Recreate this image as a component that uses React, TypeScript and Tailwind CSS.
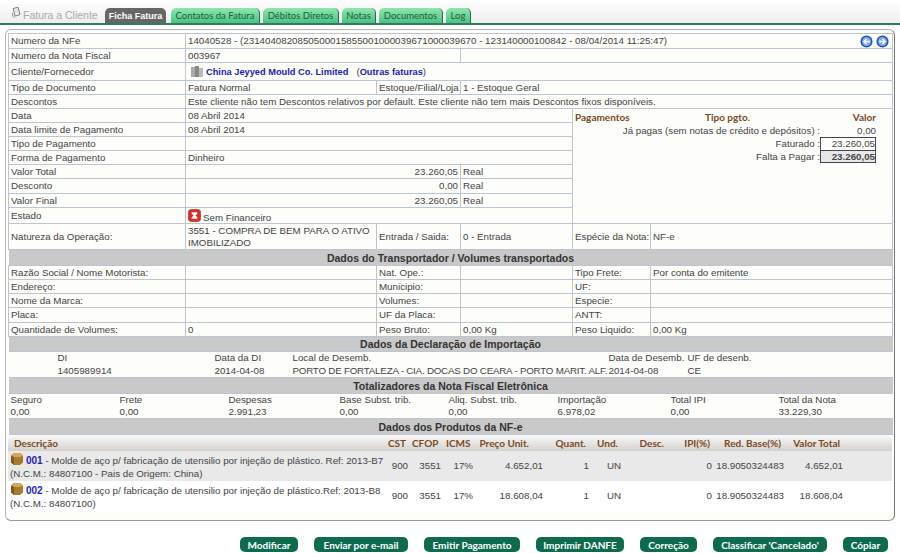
const line = 'border border-[#bcc6d2]';
const tdL = `${line} px-[2px] align-middle whitespace-nowrap`;
const head = 'bg-[#c9c9c9] text-center font-bold text-[10.5px] text-[#333] border-y border-[#bcc6d2]';
const deco = '[font-family:Lato,sans-serif]';

const tabs = [
  { name: 'Contatos da Fatura', w: 'w-[89px]' },
  { name: 'Débitos Diretos', w: 'w-[76px]' },
  { name: 'Notas', w: 'w-[34px]' },
  { name: 'Documentos', w: 'w-[64px]' },
  { name: 'Log', w: 'w-[25px]' },
];

const buttons = [
  { name: 'Modificar', w: 'w-[58px]' },
  { name: 'Enviar por e-mail', w: 'w-[94px]' },
  { name: 'Emitir Pagamento', w: 'w-[96px]' },
  { name: 'Imprimir DANFE', w: 'w-[88px]' },
  { name: 'Correção', w: 'w-[57px]' },
  { name: "Classificar 'Cancelado'", w: 'w-[114px]' },
  { name: 'Cópiar', w: 'w-[45px]' },
];

const transport = [
  { h: 'h-[14px]', cells: ['Razão Social / Nome Motorista:', '', 'Nat. Ope.:', '', 'Tipo Frete:', 'Por conta do emitente'] },
  { h: 'h-[14px]', cells: ['Endereço:', '', 'Municipio:', '', 'UF:', ''] },
  { h: 'h-[14px]', cells: ['Nome da Marca:', '', 'Volumes:', '', 'Especie:', ''] },
  { h: 'h-[15px]', cells: ['Placa:', '', 'UF da Placa:', '', 'ANTT:', ''] },
  { h: 'h-[14px]', cells: ['Quantidade de Volumes:', '0', 'Peso Bruto:', '0,00 Kg', 'Peso Liquido:', '0,00 Kg'] },
];

const totals = [
  ['Seguro', '0,00', 'w-[109px]'],
  ['Frete', '0,00', 'w-[109px]'],
  ['Despesas', '2.991,23', 'w-[111px]'],
  ['Base Subst. trib.', '0,00', 'w-[109px]'],
  ['Aliq. Subst. trib.', '0,00', 'w-[109px]'],
  ['Importação', '6.978,02', 'w-[113px]'],
  ['Total IPI', '0,00', 'w-[108px]'],
  ['Total da Nota', '33.229,30', 'w-[100px]'],
];

const products = [
  { code: '001', text: ' - Molde de aço p/ fabricação de utensilio por injeção de plástico. Ref: 2013-B7', sub: '(N.C.M.: 84807100 - Pais de Origem: China)', preco: '4.652,01', total: '4.652,01', bg: 'bg-[#e9e9e9]' },
  { code: '002', text: ' - Molde de aço p/ fabricação de utensilio por injeção de plástico.Ref: 2013-B8', sub: '(N.C.M.: 84807100)', preco: '18.608,04', total: '18.608,04', bg: 'bg-white' },
];

const Box = () => (
  <svg width="14" height="14" viewBox="0 0 14 14" className="inline-block align-top -mt-[2px] -mb-[2px]">
    <path d="M1 3.500 4 1h6l3 2.500v7L10 13H4l-3-2.500z" fill="#a8792f" />
    <path d="M1 3.500 4 1h6l3 2.500L10 5H4z" fill="#d3a85c" />
    <path d="M1 3.500 4 5v8l-3-2.500z" fill="#7d5a20" />
  </svg>
);

const Arrow = ({ left }: { left?: boolean }) => (
  <svg width="13" height="13" viewBox="0 0 14 14">
    <circle cx="7" cy="7" r="6.500" fill="#1d4fc4" />
    <circle cx="7" cy="7" r="4.800" fill="#7fb0ea" />
    <path d={left ? 'M10.500 7H4.500M7 4.200 4.200 7 7 9.800' : 'M3.500 7h6M7 4.200 9.800 7 7 9.800'} stroke="#fff" strokeWidth="1.500" fill="none" />
  </svg>
);

export default function App() {
  return (
    <div className="w-[900px] h-[553px] overflow-hidden bg-white text-[#444] text-[9.75px] leading-[12px] [font-family:Liberation_Sans,Arial,sans-serif]">
      {/* tabs */}
      <div className="h-[25px] flex items-end pl-[10px] border-b-2 border-[#2e7d5e] bg-gradient-to-b from-white to-[#eeeeee]">
        <svg width="12" height="13" viewBox="0 0 15 15" className="mb-[4px] mr-[1px] shrink-0">
          <path d="M4 2.500 10 1l2.500 9L6.500 12z" fill="#fff" stroke="#555" />
          <path d="M6 4.500 10 3.500M6.500 6.500l4-1M7 8.500l4-1" stroke="#9a9" strokeWidth=".6" />
          <path d="M3 8c0 4 1 6 3 5.500" stroke="#777" fill="none" />
        </svg>
        <span className="mb-[2px] w-[82px] text-[10.5px] text-[#aaa] whitespace-nowrap">Fatura a Cliente</span>
        <div className="h-[15px] w-[61px] shrink-0 rounded-t-[5px] bg-[#666] text-white font-bold text-[9px] flex items-center justify-center whitespace-nowrap">Ficha Fatura</div>
        <div className="flex gap-[3px] ml-[5px]">
          {tabs.map((t) => (
            <div key={t.name} className={`${t.w} h-[15px] rounded-t-[5px] bg-gradient-to-b from-[#8fe6ae] to-[#45c484] border-r border-[#2b6a4c] text-[#1f5c3a] text-[9.5px] ${deco} flex items-center justify-center whitespace-nowrap`}>
              {t.name}
            </div>
          ))}
        </div>
      </div>

      {/* card */}
      <div className="mx-[5px] mt-[4px] h-[492px] rounded-[6px] border border-[#b5b5b5] border-r-[#777] border-b-[#999] bg-[#fdfdfa] px-[2px] pt-[3px]">
        <table className="w-[884px] table-fixed border-collapse">
          <colgroup>
            <col className="w-[177px]" />
            <col className="w-[191px]" />
            <col className="w-[84px]" />
            <col className="w-[112px]" />
            <col className="w-[78px]" />
            <col className="w-[242px]" />
          </colgroup>
          <tbody>
            <tr className="h-[15px]">
              <td className={tdL}>Numero da NFe</td>
              <td className={tdL} colSpan={5}>
                <div className="flex items-center justify-between pr-[1px]">
                  <span>14040528 - (2314040820850500015855001000039671000039670 - 123140000100842 - 08/04/2014 11:25:47)</span>
                  <span className="flex gap-[3px]"><Arrow left /><Arrow /></span>
                </div>
              </td>
            </tr>
            <tr className="h-[14px]">
              <td className={tdL}>Numero da Nota Fiscal</td>
              <td className={tdL} colSpan={2}>003967</td>
              <td className={tdL} colSpan={3}></td>
            </tr>
            <tr className="h-[18px]">
              <td className={tdL}>Cliente/Fornecedor</td>
              <td className={tdL} colSpan={5}>
                <svg width="14" height="13" viewBox="0 0 14 13" className="inline-block align-top mr-[2px] ml-[2px] -mt-[1px]">
                  <path d="M1 2h5v10H1z" fill="#aaa" /><path d="M5 1h4v11H5z" fill="#888" /><path d="M9 3h4v9H9z" fill="#bbb" />
                </svg>
                <span className="font-bold text-[#2222bb] text-[9.25px]">China Jeyyed Mould Co. Limited</span>
                <span className="ml-[8px]">(<span className="font-bold text-[#2222bb] text-[9.25px]">Outras faturas</span>)</span>
              </td>
            </tr>
            <tr className="h-[14px]">
              <td className={tdL}>Tipo de Documento</td>
              <td className={tdL}>Fatura Normal</td>
              <td className={tdL}>Estoque/Filial/Loja</td>
              <td className={tdL} colSpan={3}>1 - Estoque Geral</td>
            </tr>
            <tr className="h-[14px]">
              <td className={tdL}>Descontos</td>
              <td className={tdL} colSpan={5}>Este cliente não tem Descontos relativos por default. Este cliente não tem mais Descontos fixos disponíveis.</td>
            </tr>
            <tr className="h-[14px]">
              <td className={tdL}>Data</td>
              <td className={tdL} colSpan={3}>08 Abril 2014</td>
              <td className={`${line} align-top p-0`} colSpan={2} rowSpan={8}>
                <div className="pl-[2px] pr-[16px] pt-[2px]">
                  <div className={`flex font-bold text-[#7a4a1e] ${deco} text-[10px] leading-[13px]`}>
                    <span className="w-[130px]">Pagamentos</span>
                    <span className="flex-1">Tipo pgto.</span>
                    <span>Valor</span>
                  </div>
                  <div className="flex justify-end h-[13px] items-center">
                    <span>Já pagas (sem notas de crédito e depósitos) :</span>
                    <span className="w-[56px] text-right">0,00</span>
                  </div>
                  <div className="flex justify-end h-[13px] items-center">
                    <span>Faturado :</span>
                    <span className="w-[56px] text-right border border-[#445] border-b-0 h-[13px]">23.260,05</span>
                  </div>
                  <div className="flex justify-end h-[13px] items-center">
                    <span>Falta a Pagar :</span>
                    <span className="w-[56px] text-right border border-[#445] h-[13px] font-bold bg-[#e8e8e8]">23.260,05</span>
                  </div>
                </div>
              </td>
            </tr>
            <tr className="h-[14px]">
              <td className={tdL}>Data limite de Pagamento</td>
              <td className={tdL} colSpan={3}>08 Abril 2014</td>
            </tr>
            <tr className="h-[14px]">
              <td className={tdL}>Tipo de Pagamento</td>
              <td className={tdL} colSpan={3}></td>
            </tr>
            <tr className="h-[14px]">
              <td className={tdL}>Forma de Pagamento</td>
              <td className={tdL} colSpan={3}>Dinheiro</td>
            </tr>
            <tr className="h-[14px]">
              <td className={tdL}>Valor Total</td>
              <td className={`${tdL} text-right`} colSpan={2}>23.260,05</td>
              <td className={tdL}>Real</td>
            </tr>
            <tr className="h-[15px]">
              <td className={tdL}>Desconto</td>
              <td className={`${tdL} text-right`} colSpan={2}>0,00</td>
              <td className={tdL}>Real</td>
            </tr>
            <tr className="h-[14px]">
              <td className={tdL}>Valor Final</td>
              <td className={`${tdL} text-right`} colSpan={2}>23.260,05</td>
              <td className={tdL}>Real</td>
            </tr>
            <tr className="h-[16px]">
              <td className={tdL}>Estado</td>
              <td className={tdL} colSpan={3}>
                <svg width="13" height="13" viewBox="0 0 14 14" className="inline-block align-top mr-[2px] -mt-[1px]">
                  <rect x=".5" y=".5" width="13" height="13" rx="3" fill="#e02a2a" stroke="#a01818" strokeWidth=".6" />
                  <path d="M4 3.500h6V5L8 7l2 2v1.500H4V9l2-2-2-2z" fill="#fff" />
                </svg>
                <span className="relative top-[2px]">Sem Financeiro</span>
              </td>
            </tr>
            <tr className="h-[26px]">
              <td className={tdL}>Natureza da Operação:</td>
              <td className={`${line} px-[2px] align-middle`}>3551 - COMPRA DE BEM PARA O ATIVO IMOBILIZADO</td>
              <td className={tdL}>Entrada / Saida:</td>
              <td className={tdL}>0 - Entrada</td>
              <td className={tdL}>Espécie da Nota:</td>
              <td className={tdL}>NF-e</td>
            </tr>
            <tr className="h-[16px]">
              <td className={head} colSpan={6}>Dados do Transportador / Volumes transportados</td>
            </tr>
            {transport.map((r) => (
              <tr key={r.cells[0]} className={r.h}>
                {r.cells.map((c, i) => (
                  <td key={i} className={tdL}>{c}</td>
                ))}
              </tr>
            ))}
            <tr className="h-[15px]">
              <td className={head} colSpan={6}>Dados da Declaração de Importação</td>
            </tr>
            <tr className="h-[26px]">
              <td colSpan={6} className="p-0 align-middle">
                <div className="flex leading-[12.500px] whitespace-nowrap">
                  <div className="ml-[49px] w-[157px]">DI<br />1405989914</div>
                  <div className="w-[78px]">Data da DI<br />2014-04-08</div>
                  <div className="w-[316px]">Local de Desemb.<br /><span className="tracking-[-0.2px]">PORTO DE FORTALEZA - CIA. DOCAS DO CEARA - PORTO MARIT. ALF.</span></div>
                  <div className="w-[79px]">Data de Desemb.<br />2014-04-08</div>
                  <div>UF de desenb.<br />CE</div>
                </div>
              </td>
            </tr>
            <tr className="h-[16px]">
              <td className={head} colSpan={6}>Totalizadores da Nota Fiscal Eletrônica</td>
            </tr>
            <tr className="h-[25px]">
              <td colSpan={6} className="p-0 align-middle">
                <div className="flex pl-[2px] leading-[12px] whitespace-nowrap">
                  {totals.map(([label, value, w]) => (
                    <div key={label} className={w}>{label}<br />{value}</div>
                  ))}
                </div>
              </td>
            </tr>
            <tr className="h-[16px]">
              <td className={head} colSpan={6}>Dados dos Produtos da NF-e</td>
            </tr>
          </tbody>
        </table>

        {/* produtos */}
        <table className="w-[884px] table-fixed border-collapse">
          <colgroup>
            <col className="w-[380px]" />
            <col className="w-[24px]" />
            <col className="w-[34px]" />
            <col className="w-[32px]" />
            <col className="w-[67px]" />
            <col className="w-[45px]" />
            <col className="w-[40px]" />
            <col className="w-[38px]" />
            <col className="w-[45px]" />
            <col className="w-[72px]" />
            <col className="w-[60px]" />
            <col className="w-[47px]" />
          </colgroup>
          <thead>
            <tr className={`h-[16px] bg-gradient-to-b from-[#fafafa] to-[#d4d0cc] text-[#7a4a1e] text-[10px] whitespace-nowrap ${deco}`}>
              <th className="text-left font-bold pl-[6px] rounded-tl-[5px]">Descrição</th>
              <th className="font-bold text-right pr-[7px]">CST</th>
              <th className="font-bold text-right pr-[9px]">CFOP</th>
              <th className="font-bold text-right pr-[9px]">ICMS</th>
              <th className="font-bold text-right pr-[16px]">Preço Unit.</th>
              <th className="font-bold text-right pr-[4px]">Quant.</th>
              <th className="font-bold text-right pr-[12px]">Und.</th>
              <th className="font-bold text-right pr-[4px]">Desc.</th>
              <th className="font-bold text-right pr-[3px]">IPI(%)</th>
              <th className="font-bold text-right pr-[4px]">Red. Base(%)</th>
              <th className="font-bold text-right pr-[5px]">Valor Total</th>
              <th className="rounded-tr-[5px]"></th>
            </tr>
          </thead>
          <tbody>
            {products.map((p) => (
              <tr key={p.code} className={`h-[30px] ${p.bg}`}>
                <td className="pl-[2px] pt-[3px] align-top leading-[13px] whitespace-nowrap">
                  <Box />
                  <span className="ml-[2px] font-bold text-[#2222bb] text-[10px]">{p.code}</span>
                  {p.text}
                  <br />
                  {p.sub}
                </td>
                <td className="text-right pr-[4px]">900</td>
                <td className="text-right pr-[5px]">3551</td>
                <td className="text-right pr-[5px]">17%</td>
                <td className="text-right pr-[2px]">{p.preco}</td>
                <td className="text-right pr-[1px]">1</td>
                <td className="text-right pr-[9px]">UN</td>
                <td></td>
                <td className="text-right pr-[1px]">0</td>
                <td className="text-right pr-[1px] whitespace-nowrap">18.9050324483</td>
                <td className="text-right pr-[2px]">{p.total}</td>
                <td></td>
              </tr>
            ))}
          </tbody>
        </table>
      </div>

      {/* botoes */}
      <div className="flex justify-end gap-[16px] mt-[16px] pr-[12px]">
        {buttons.map((b) => (
          <div key={b.name} className={`${b.w} h-[15px] rounded-[5px] bg-[#0e6b50] text-white font-bold text-[10px] ${deco} flex items-center justify-center whitespace-nowrap`}>
            {b.name}
          </div>
        ))}
      </div>
    </div>
  );
}
